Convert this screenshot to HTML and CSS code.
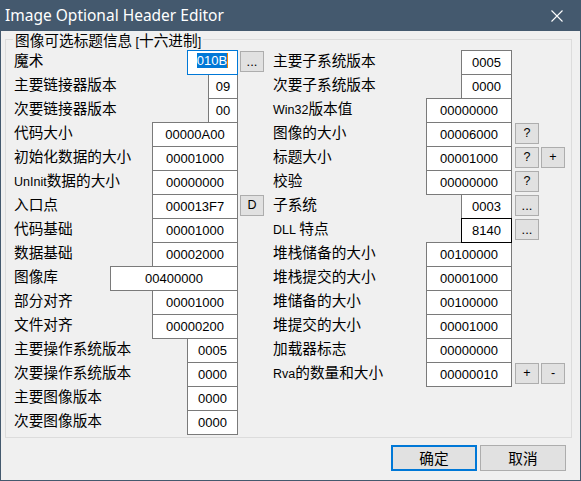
FILE: index.html
```html
<!DOCTYPE html>
<html lang="zh">
<head>
<meta charset="utf-8">
<title>Image Optional Header Editor</title>
<link rel="stylesheet" href="styles.css">
</head>
<body>
<div class="window">
  <div class="titlebar">
    <span class="title">Image Optional Header Editor</span>
    <span class="close"><svg width="12" height="12" viewBox="0 0 12 12"><path d="M0.5 0.5 L11.5 11.5 M11.5 0.5 L0.5 11.5" stroke="#fff" stroke-width="1.1" fill="none"/></svg></span>
  </div>
  <div class="client">
    <div class="group">
      <span class="legend">图像可选标题信息 <span class="lat">[</span>十六进制<span class="lat">]</span></span>
      <div class="col col-left">
        <div class="row"><span class="lbl">魔术</span><span class="val w51 focus"><span class="sel">010B</span></span><span class="slot"><span class="mini dots">...</span></span></div>
        <div class="row"><span class="lbl">主要链接器版本</span><span class="val w30">09</span><span class="slot"></span></div>
        <div class="row"><span class="lbl">次要链接器版本</span><span class="val w30">00</span><span class="slot"></span></div>
        <div class="row"><span class="lbl">代码大小</span><span class="val w86">00000A00</span><span class="slot"></span></div>
        <div class="row"><span class="lbl">初始化数据的大小</span><span class="val w86">00001000</span><span class="slot"></span></div>
        <div class="row"><span class="lbl"><span class="lat">UnInit</span>数据的大小</span><span class="val w86">00000000</span><span class="slot"></span></div>
        <div class="row"><span class="lbl">入口点</span><span class="val w86">000013F7</span><span class="slot"><span class="mini">D</span></span></div>
        <div class="row"><span class="lbl">代码基础</span><span class="val w86">00001000</span><span class="slot"></span></div>
        <div class="row"><span class="lbl">数据基础</span><span class="val w86">00002000</span><span class="slot"></span></div>
        <div class="row"><span class="lbl">图像库</span><span class="val w128">00400000</span><span class="slot"></span></div>
        <div class="row"><span class="lbl">部分对齐</span><span class="val w86">00001000</span><span class="slot"></span></div>
        <div class="row"><span class="lbl">文件对齐</span><span class="val w86">00000200</span><span class="slot"></span></div>
        <div class="row"><span class="lbl">主要操作系统版本</span><span class="val w51">0005</span><span class="slot"></span></div>
        <div class="row"><span class="lbl">次要操作系统版本</span><span class="val w51">0000</span><span class="slot"></span></div>
        <div class="row"><span class="lbl">主要图像版本</span><span class="val w51">0000</span><span class="slot"></span></div>
        <div class="row"><span class="lbl">次要图像版本</span><span class="val w51">0000</span><span class="slot"></span></div>
      </div>
      <div class="col col-right">
        <div class="row"><span class="lbl">主要子系统版本</span><span class="val w51">0005</span><span class="slot"></span></div>
        <div class="row"><span class="lbl">次要子系统版本</span><span class="val w51">0000</span><span class="slot"></span></div>
        <div class="row"><span class="lbl"><span class="lat">Win32</span>版本值</span><span class="val w86">00000000</span><span class="slot"></span></div>
        <div class="row"><span class="lbl">图像的大小</span><span class="val w86">00006000</span><span class="slot"><span class="mini">?</span></span></div>
        <div class="row"><span class="lbl">标题大小</span><span class="val w86">00001000</span><span class="slot"><span class="mini">?</span><span class="mini">+</span></span></div>
        <div class="row"><span class="lbl">校验</span><span class="val w86">00000000</span><span class="slot"><span class="mini">?</span></span></div>
        <div class="row"><span class="lbl">子系统</span><span class="val w51">0003</span><span class="slot"><span class="mini dots">...</span></span></div>
        <div class="row"><span class="lbl"><span class="lat">DLL</span> 特点</span><span class="val w51 hover">8140</span><span class="slot"><span class="mini dots">...</span></span></div>
        <div class="row"><span class="lbl">堆栈储备的大小</span><span class="val w86">00100000</span><span class="slot"></span></div>
        <div class="row"><span class="lbl">堆栈提交的大小</span><span class="val w86">00001000</span><span class="slot"></span></div>
        <div class="row"><span class="lbl">堆储备的大小</span><span class="val w86">00100000</span><span class="slot"></span></div>
        <div class="row"><span class="lbl">堆提交的大小</span><span class="val w86">00001000</span><span class="slot"></span></div>
        <div class="row"><span class="lbl">加载器标志</span><span class="val w86">00000000</span><span class="slot"></span></div>
        <div class="row"><span class="lbl"><span class="lat">Rva</span>的数量和大小</span><span class="val w86">00000010</span><span class="slot"><span class="mini">+</span><span class="mini">-</span></span></div>
      </div>
    </div>
    <div class="actions">
      <button class="btn default">确定</button>
      <button class="btn">取消</button>
    </div>
  </div>
</div>
</body>
</html>
```
FILE: styles.css
```css
* { box-sizing: border-box; }
html, body { margin: 0; padding: 0; background: #f0f0f0; }
body { font-family: "Noto Sans CJK SC", "Noto Sans", sans-serif; color: #000; }

.window {
  width: 581px;
  height: 481px;
  display: flex;
  flex-direction: column;
  background: #f0f0f0;
}

.titlebar {
  height: 31px;
  flex: none;
  background: #44596e;
  display: flex;
  align-items: center;
  color: #fff;
}
.title {
  flex: 1;
  padding-left: 5px;
  font: 15.5px/31px "Noto Sans", sans-serif;
  white-space: nowrap;
}
.close {
  width: 46px;
  height: 31px;
  display: flex;
  align-items: center;
  justify-content: center;
  margin-right: 1px;
}

.client {
  flex: 1;
  border: 1px solid #44596e;
  border-top: 0;
  padding: 8px 0 0 4px;
  display: flex;
  flex-direction: column;
}

.group {
  position: relative;
  width: 567px;
  height: 399px;
  border: 1px solid #dcdcdc;
  padding: 10px 0 0 8px;
  display: flex;
  gap: 9px;
}
.legend {
  position: absolute;
  top: -9px;
  left: 7px;
  padding: 0 2px;
  background: #f0f0f0;
  font-size: 14.67px;
  line-height: 18px;
  white-space: nowrap;
}

.col { display: flex; flex-direction: column; }
.col-left { width: 250px; }
.col-right { width: 292px; }

.row {
  display: flex;
  height: 24px;
  flex: none;
}
.lbl {
  flex: 1;
  font-size: 14.67px;
  line-height: 20px;
  white-space: nowrap;
}
.lat {
  font-family: "Liberation Sans", Arial, sans-serif;
  font-size: 12.5px;
}

.val {
  flex: none;
  height: 25px;
  border: 1px solid #7a7a7a;
  background: #fff;
  font: 13px/23px "Liberation Sans", Arial, sans-serif;
  text-align: center;
  white-space: nowrap;
}
.w30 { width: 30px; }
.w51 { width: 51px; }
.w86 { width: 86px; }
.w128 { width: 128px; }
.val.focus { border-color: #0078d7; position: relative; z-index: 1; }
.val.hover { border-color: #000; position: relative; z-index: 1; }
.sel {
  display: inline-block;
  vertical-align: top;
  margin-top: 2px;
  background: #0078d7;
  color: #fff;
  line-height: 15px;
  border-right: 1px solid #f08000;
}

.col-left .slot { width: 24px; margin-left: 2px; display: flex; }
.col-right .slot { width: 50px; margin-left: 3px; display: flex; gap: 2px; }
.mini {
  width: 24px;
  height: 21px;
  margin-top: 1px;
  border: 1px solid #adadad;
  background: #e1e1e1;
  font: 12.5px/19px "Liberation Sans", Arial, sans-serif;
  text-align: center;
}
.mini.dots { font-size: 13px; line-height: 20px; }

.actions {
  display: flex;
  justify-content: flex-end;
  gap: 3px;
  margin-top: 7px;
  padding-right: 14px;
}
.btn {
  width: 86px;
  height: 26px;
  padding: 0;
  border: 1px solid #adadad;
  background: #e1e1e1;
  font-family: "Noto Sans CJK SC", sans-serif;
  font-size: 14.67px;
  line-height: 22px;
  color: #000;
}
.btn.default { border: 2px solid #0078d7; }
```
